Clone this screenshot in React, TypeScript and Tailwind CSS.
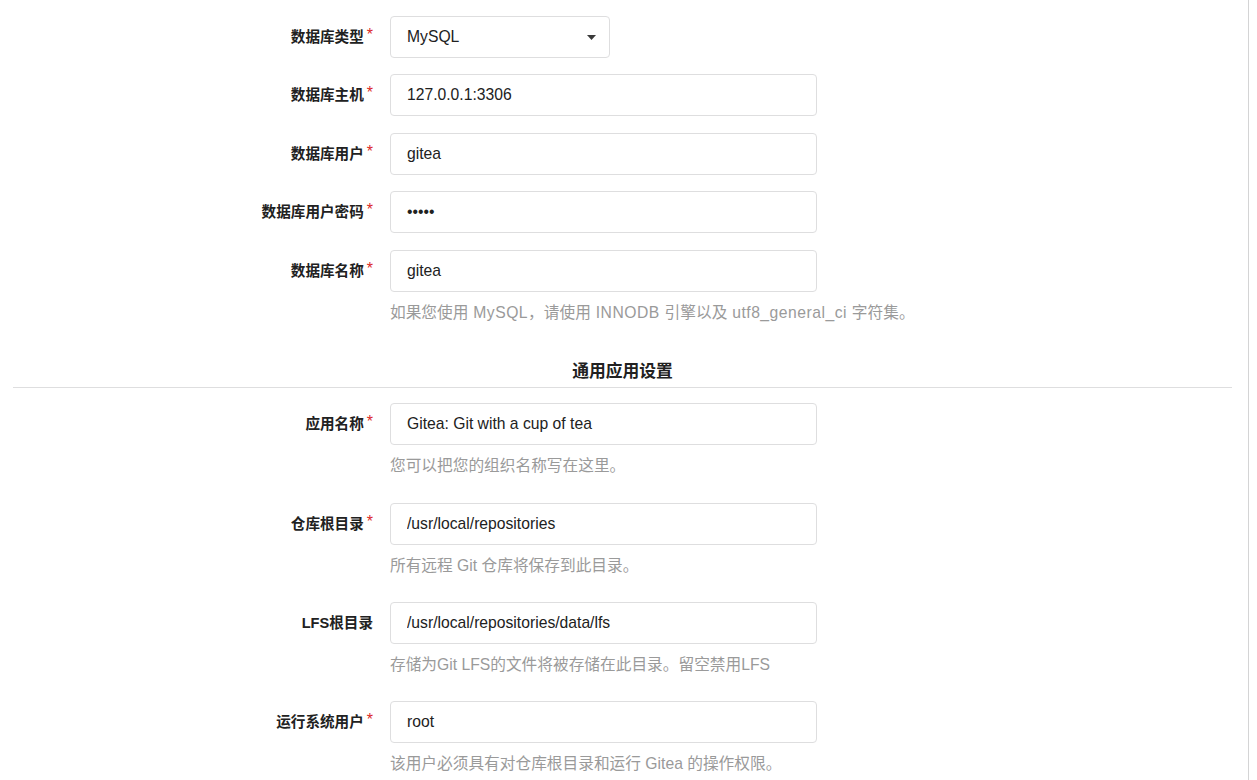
import React from "react";

const FONT = { fontFamily: '"Liberation Sans", "Noto Sans CJK SC", sans-serif' };

function Label({ text, required }: { text: string; required?: boolean }) {
  return (
    <div className="w-[360px] shrink-0 text-right font-bold text-[14.6px] leading-[20px] text-[#212121]">
      {text}
      {required && (
        <span className="relative -top-[2px] ml-[3px] text-[16px] font-normal text-[#db2828]">*</span>
      )}
    </div>
  );
}

function TextInput({ value, type = "text" }: { value: string; type?: string }) {
  return (
    <input
      type={type}
      readOnly
      defaultValue={value}
      className="ml-[17px] box-border h-[42px] w-[427px] rounded-[4px] border border-[#dededf] bg-white px-[16px] text-[15.7px] text-[#212121] outline-none"
    />
  );
}

function Row({
  label,
  required,
  value,
  type,
}: {
  label: string;
  required?: boolean;
  value: string;
  type?: string;
}) {
  return (
    <div className="flex items-center">
      <Label text={label} required={required} />
      <TextInput value={value} type={type} />
    </div>
  );
}

function Help({ children }: { children: React.ReactNode }) {
  return (
    <div className="mt-[11px] pl-[377px] text-[15.7px] leading-[20px] text-[#9a9a9a]">{children}</div>
  );
}

export default function App() {
  return (
    <div className="min-h-[780px] w-[1257px] bg-white" style={FONT}>
      <div className="box-border min-h-[780px] w-[1249px] border-r border-[#d4d4d5] pl-[13px] pr-[16px] pt-[16px]">
        <div className="flex flex-col gap-[16.4px]">
          <div className="flex items-center">
            <Label text="数据库类型" required />
            <div className="ml-[17px] box-border flex h-[42px] w-[220px] items-center justify-between rounded-[4px] border border-[#dededf] bg-white pl-[16px] pr-[13px] text-[15.7px] text-[#212121]">
              <span>MySQL</span>
              <svg width="9" height="5" viewBox="0 0 9 5">
                <path d="M0 0 L9 0 L4.5 5 Z" fill="#3a3a3a" />
              </svg>
            </div>
          </div>
          <Row label="数据库主机" required value="127.0.0.1:3306" />
          <Row label="数据库用户" required value="gitea" />
          <Row label="数据库用户密码" required value="gitea" type="password" />
          <Row label="数据库名称" required value="gitea" />
        </div>
        <Help>
          如果您使用<span className="tracking-[0.5px]"> MySQL</span>，请使用
          <span className="tracking-[0.5px]"> INNODB </span>引擎以及
          <span className="tracking-[0.5px]"> utf8_general_ci </span>字符集。
        </Help>

        <div className="mt-[37px] border-b border-[#dededf] pb-[3px] text-center text-[16.8px] font-bold leading-[24px] text-[#212121]">
          通用应用设置
        </div>

        <div className="mt-[15px]">
          <Row label="应用名称" required value="Gitea: Git with a cup of tea" />
          <Help>您可以把您的组织名称写在这里。</Help>
        </div>
        <div className="mt-[27px]">
          <Row label="仓库根目录" required value="/usr/local/repositories" />
          <Help>所有远程 Git 仓库将保存到此目录。</Help>
        </div>
        <div className="mt-[26px]">
          <Row label="LFS根目录" value="/usr/local/repositories/data/lfs" />
          <Help>存储为Git LFS的文件将被存储在此目录。留空禁用LFS</Help>
        </div>
        <div className="mt-[26px]">
          <Row label="运行系统用户" required value="root" />
          <Help>该用户必须具有对仓库根目录和运行 Gitea 的操作权限。</Help>
        </div>
      </div>
    </div>
  );
}
